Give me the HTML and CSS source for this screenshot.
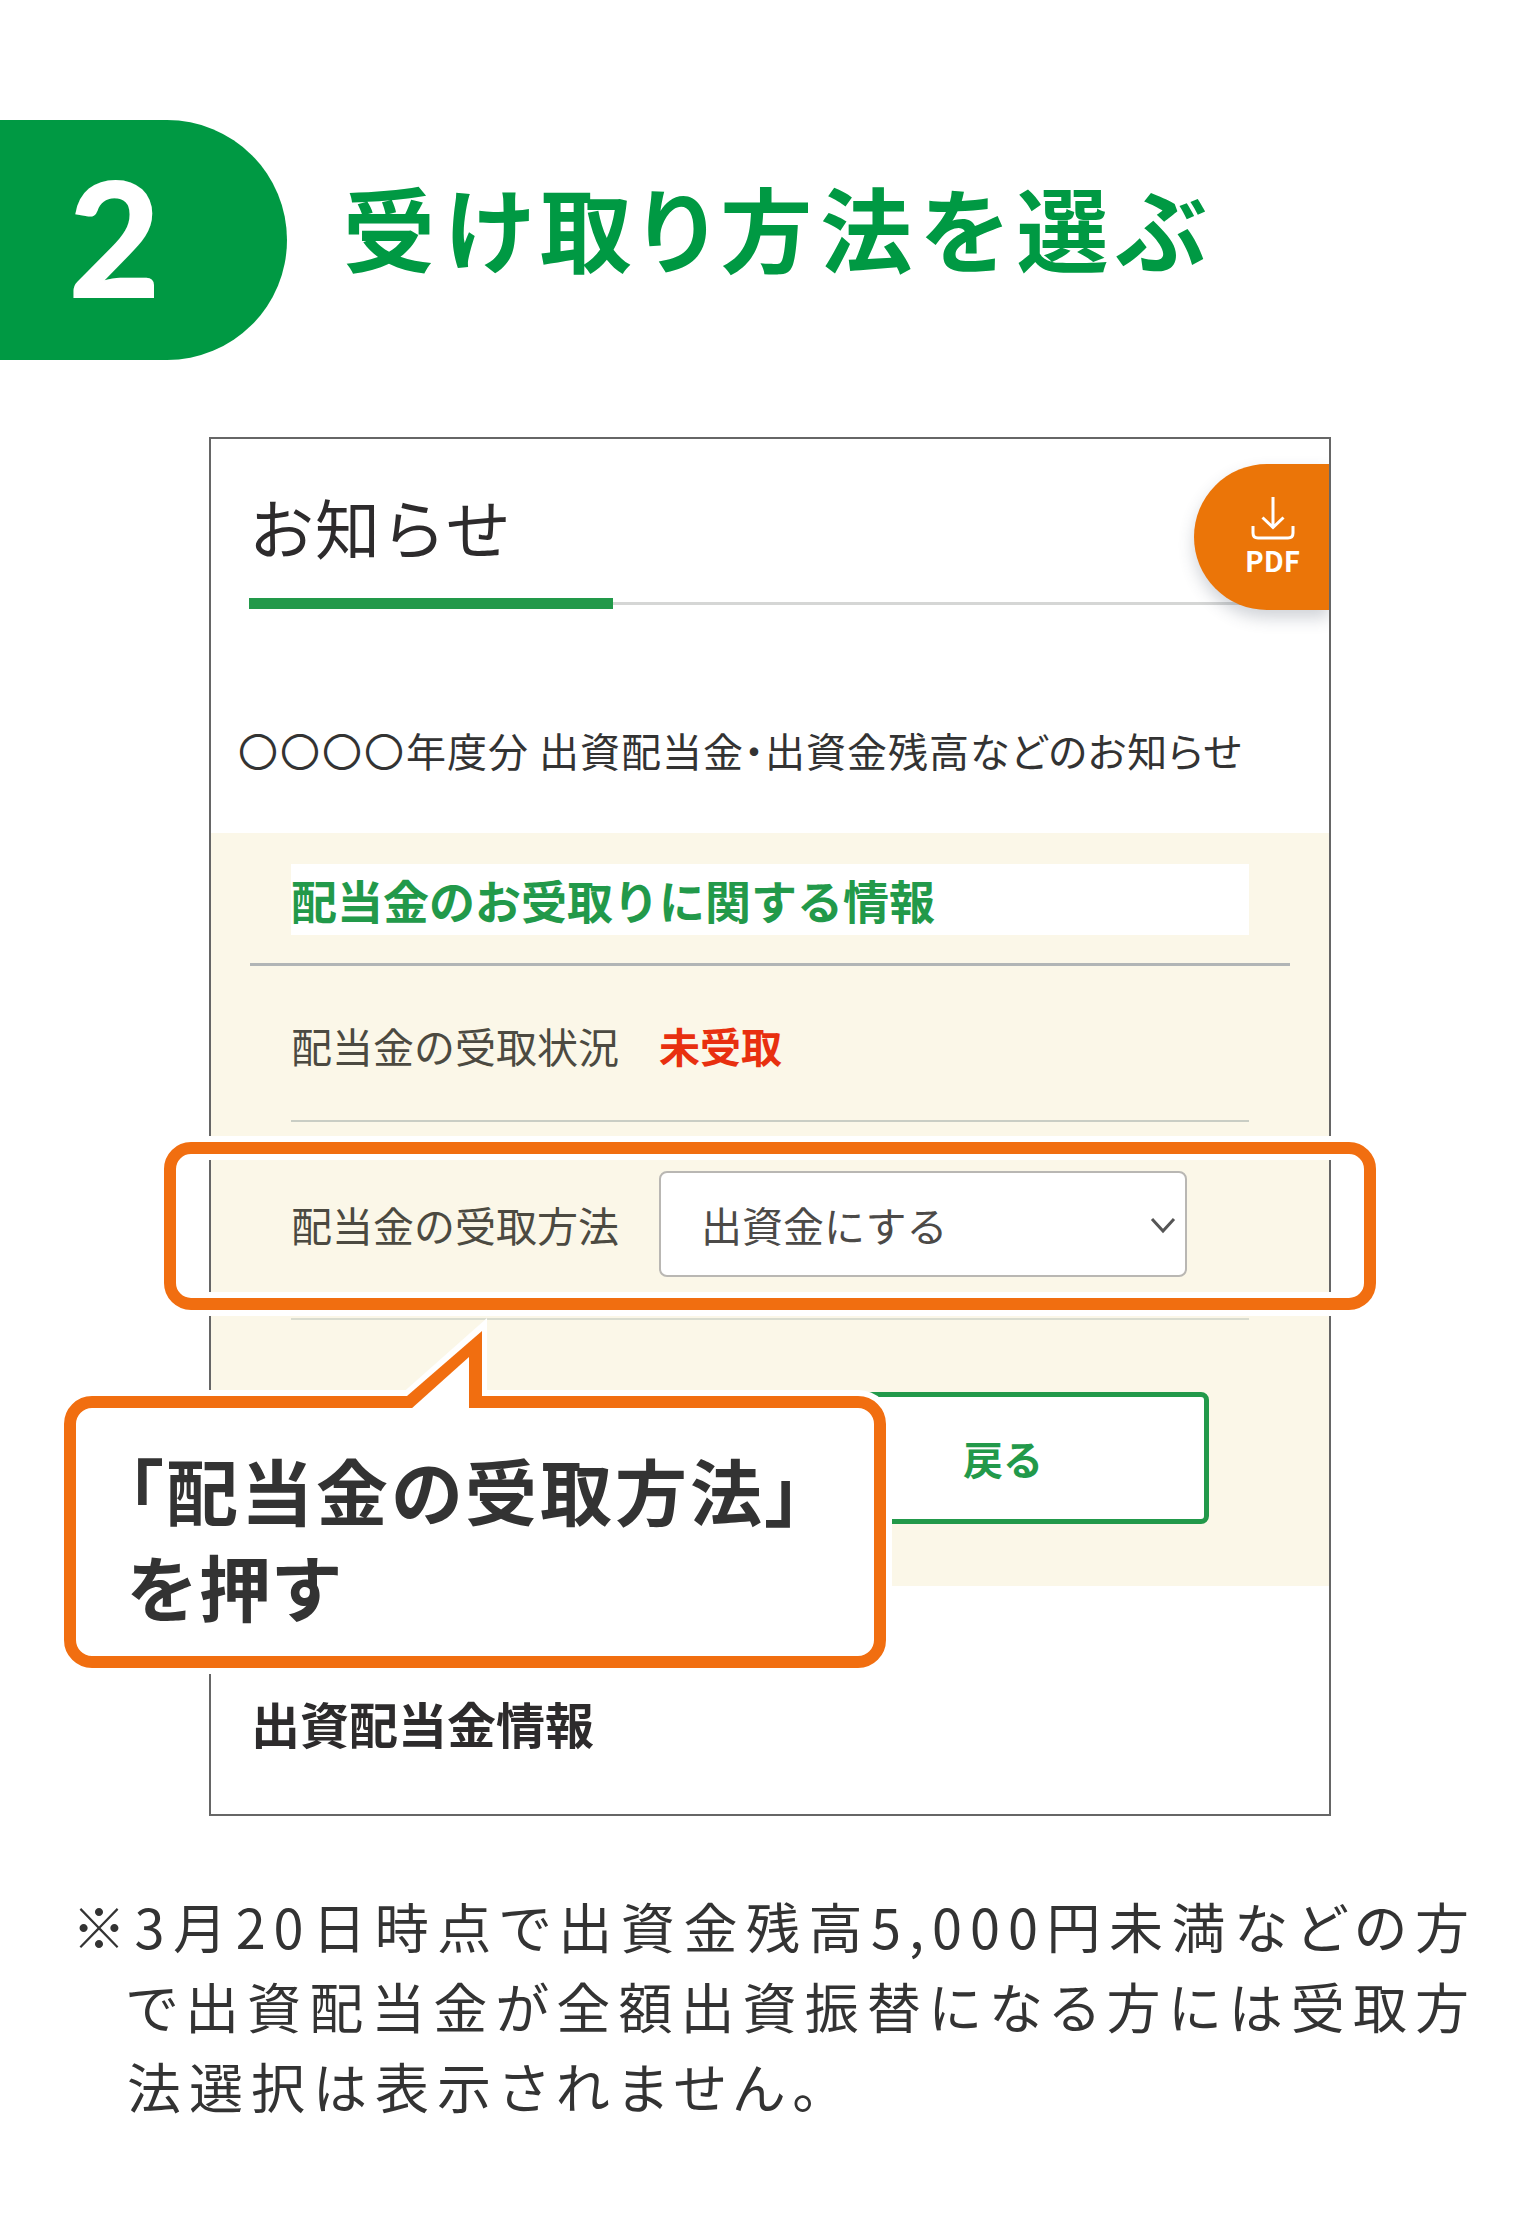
FILE: index.html
```html
<!DOCTYPE html>
<html lang="ja">
<head>
<meta charset="utf-8">
<meta name="viewport" content="width=device-width, initial-scale=1">
<title>受け取り方法を選ぶ</title>
<link rel="stylesheet" href="styles.css">
</head>
<body>
<main class="guide">
  <header class="step">
    <span class="step-number">2</span>
    <h1 class="step-title">受け取り方法を選ぶ</h1>
  </header>

  <section class="screen">
    <div class="screen-head">
      <h2 class="screen-title">お知らせ</h2>
      <div class="rule"><span class="rule-accent"></span><span class="rule-line"></span></div>
      <button class="pdf" type="button">
        <svg class="pdf-icon" viewBox="0 0 44 44" aria-hidden="true">
          <path d="M22 1v30M11.500 21.500L22 31.500L32.500 21.500M2 30v7q0 5 5 5h30q5 0 5-5v-7"/>
        </svg>
        PDF
      </button>
    </div>
    <p class="subject"><span class="subject-year">〇〇〇〇</span>年度分 出資配当金・出資金残高などのお知らせ</p>

    <div class="panel">
      <div class="panel-head">
        <h3 class="panel-title">配当金のお受取りに関する情報</h3>
      </div>
      <div class="row">
        <span class="row-label">配当金の受取状況</span>
        <strong class="status">未受取</strong>
      </div>
      <div class="row row-method">
        <label class="row-label" for="method">配当金の受取方法</label>
        <div class="select-box">
          <select id="method" class="select">
            <option>出資金にする</option>
          </select>
          <svg class="chevron" viewBox="0 0 26 17" aria-hidden="true"><path d="M2 2L13 14L24 2"/></svg>
        </div>
        <span class="highlight"></span>
      </div>
      <div class="actions">
        <button class="back" type="button">戻る</button>
        <div class="callout">
          <svg class="callout-tail" viewBox="0 0 100 90" aria-hidden="true">
            <path class="tail-halo" d="M6 78L94 0V78z"/>
            <path class="tail-edge" d="M14 78L89 13V90H14z"/>
            <path class="tail-fill" d="M18 91L76 39V91z"/>
          </svg>
          <p class="callout-text">「配当金の受取方法」<br>を押す</p>
        </div>
      </div>
    </div>

    <h3 class="next-title">出資配当金情報</h3>
  </section>

  <p class="note">※3月20日時点で出資金残高5,000円未満などの方で出資配当金が全額出資振替になる方には受取方法選択は表示されません。</p>
</main>
</body>
</html>
```
FILE: styles.css
```css
* { box-sizing: border-box; }

body {
  margin: 0;
  background: #fff;
  color: #333;
  font-family: "Noto Sans CJK JP", "Noto Sans", sans-serif;
}

h1, h2, h3, p { margin: 0; }

.guide { padding: 120px 0 104px; }

/* Step heading */
.step {
  display: flex;
  align-items: center;
  gap: 56px;
  color: #009943;
}
.step-number {
  display: flex;
  align-items: center;
  flex: none;
  width: 287px;
  height: 240px;
  padding: 0 0 8px 68px;
  border-radius: 0 120px 120px 0;
  background: #009943;
  color: #fff;
  font-family: Lato, sans-serif;
  font-size: 160px;
  font-weight: 900;
  line-height: 1;
}
.step-title {
  padding-bottom: 28px;
  font-size: 92px;
  font-weight: 700;
  line-height: 120px;
  letter-spacing: 8px;
  font-feature-settings: "palt";
}

/* App screen */
.screen {
  position: relative;
  max-width: 1122px;
  margin: 77px auto 0;
  border: 2px solid #666;
  background: #fff;
}
.screen-head { padding: 41px 38px 0; }
.screen-title {
  color: #2d2b2c;
  font-size: 65px;
  font-weight: 400;
  line-height: 92px;
  letter-spacing: 1px;
}
.rule {
  display: flex;
  align-items: center;
  margin-top: 26px;
}
.rule-accent { width: 364px; height: 11px; background: #22994a; }
.rule-line { flex: 1; height: 3px; background: #d5d6d5; }

.pdf {
  position: absolute;
  top: 25px;
  right: 0;
  display: flex;
  flex-direction: column;
  align-items: center;
  width: 135px;
  height: 146px;
  padding: 32px 0 0 22px;
  border: 0;
  border-radius: 73px 0 0 73px;
  background: #eb7508;
  box-shadow: 0 8px 16px rgba(60, 70, 90, .24);
  clip-path: inset(-10px 0 -40px -40px);
  color: #fff;
  font: 700 28px/40px "Noto Sans CJK JP", sans-serif;
}
.pdf-icon {
  width: 44px;
  height: 44px;
  fill: none;
  stroke: #fff;
  stroke-width: 3;
}

.subject {
  margin: 111px 0 53px;
  padding-left: 27px;
  font-size: 40px;
  line-height: 60px;
  letter-spacing: 1px;
  font-feature-settings: "palt";
}
.subject-year { letter-spacing: 2px; }

/* Dividend panel */
.panel { background: #fbf7e8; padding: 31px 39px 0; }
.panel-head {
  padding: 0 41px 28px;
  border-bottom: 3px solid #b1b5b6;
}
.panel-title {
  background: #fff;
  color: #22994a;
  font-size: 46px;
  font-weight: 700;
  line-height: 71px;
}
.row {
  position: relative;
  display: flex;
  align-items: center;
  min-height: 156px;
  margin: 0 41px;
  padding-top: 4px;
  border-bottom: 2px solid #c9cdc4;
  color: #4c4a41;
  font-size: 41px;
}
.row-method { min-height: 198px; padding-top: 8px; border-color: #d9dccf; }
.row-label { width: 368px; }
.status { color: #e8300f; font-weight: 700; }

.select-box { position: relative; width: 528px; }
.select {
  appearance: none;
  display: block;
  width: 100%;
  height: 106px;
  padding: 0 60px 0 40px;
  border: 2px solid #b9b7b3;
  border-radius: 8px;
  background: #fff;
  color: #4c4a48;
  font: inherit;
}
.chevron {
  position: absolute;
  top: 46px;
  right: 11px;
  width: 26px;
  height: 17px;
  fill: none;
  stroke: #555;
  stroke-width: 3;
  pointer-events: none;
}
.highlight {
  position: absolute;
  inset: 20px -127px 8px;
  border: 12px solid #f16e10;
  border-radius: 27px;
  box-shadow: 0 0 0 6px #fff, inset 0 0 0 6px #fff;
  pointer-events: none;
}

.actions {
  position: relative;
  display: flex;
  justify-content: flex-end;
  padding: 72px 81px 62px;
}
.back {
  width: 412px;
  height: 132px;
  border: 5px solid #22994a;
  border-radius: 8px;
  background: #fff;
  color: #22994a;
  font: 700 40px/60px "Noto Sans CJK JP", sans-serif;
}

/* Callout over the screen */
.callout {
  position: absolute;
  top: 76px;
  left: -186px;
  width: 822px;
  padding: 33px 51px 23px;
  border: 12px solid #f16e10;
  border-radius: 28px;
  background: #fff;
  box-shadow: 0 0 0 6px #fff;
}
.callout-tail {
  position: absolute;
  top: -90px;
  left: 317px;
  width: 100px;
  height: 90px;
}
.tail-halo, .tail-fill { fill: #fff; }
.tail-edge { fill: #f16e10; }
.callout-text {
  font-size: 72px;
  font-weight: 700;
  line-height: 96px;
  letter-spacing: 3px;
  font-feature-settings: "palt";
}

.next-title {
  padding: 101px 40px 55px;
  color: #2d2b2c;
  font-size: 49px;
  font-weight: 700;
  line-height: 72px;
}

/* Footnote with a hanging reference mark */
.note {
  margin-top: 70px;
  padding: 0 63px 0 127px;
  text-indent: -55px;
  text-align: justify;
  font-size: 54px;
  line-height: 80px;
  letter-spacing: 8px;
  font-feature-settings: "palt";
}
```
